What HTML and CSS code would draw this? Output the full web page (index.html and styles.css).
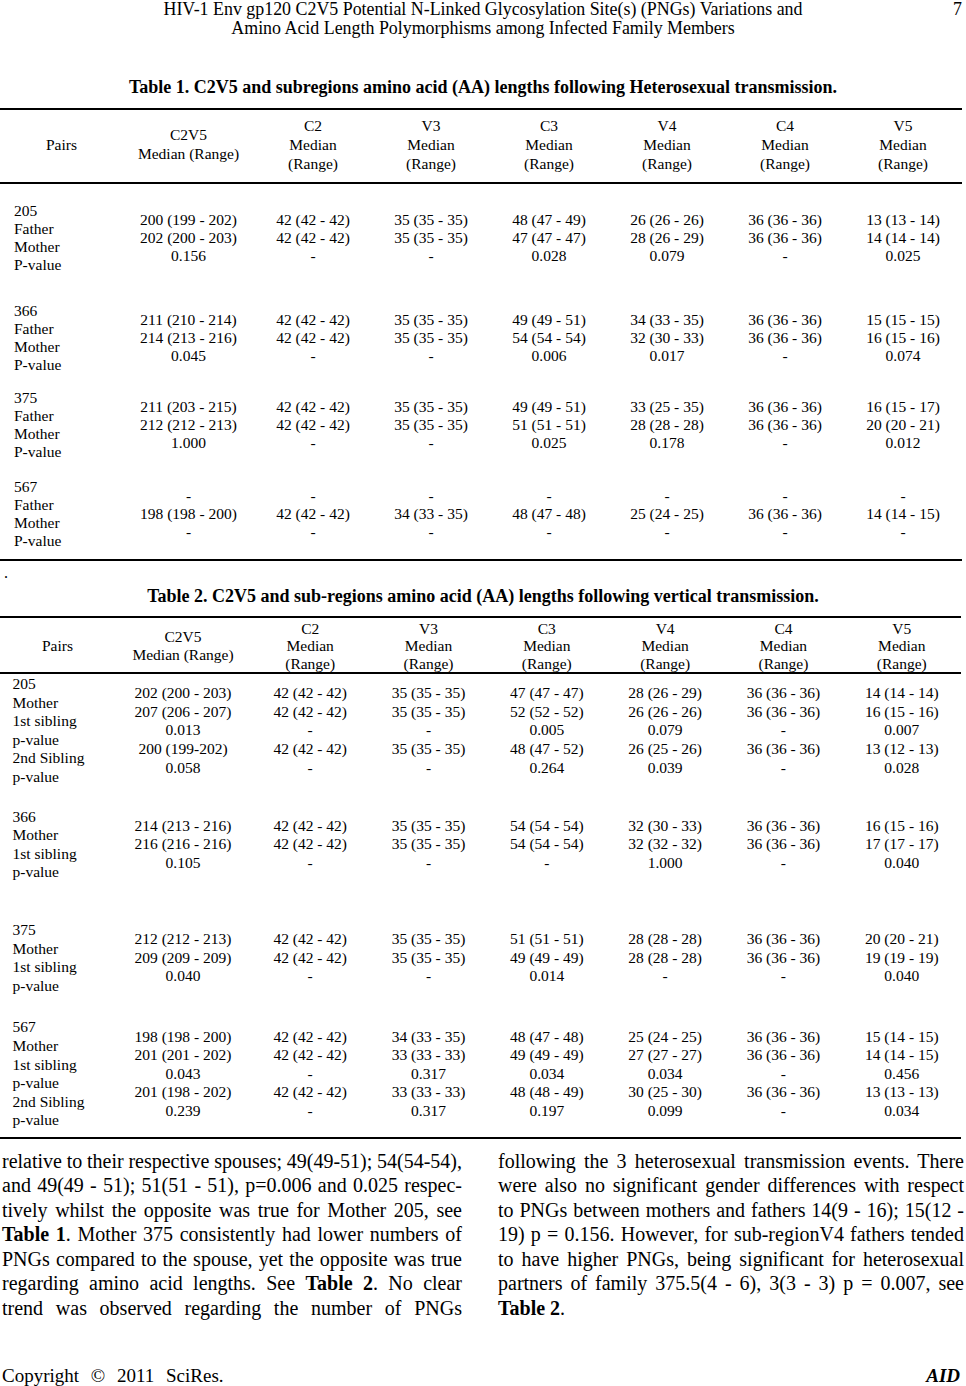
FILE: index.html
```html
<!DOCTYPE html>
<html lang="en">
<head>
<meta charset="utf-8">
<title>HIV-1 Env gp120 C2V5 PNGs — page 7</title>
<link rel="stylesheet" href="styles.css">
</head>
<body>
<div class="page">
  <header class="running-head">
    <div class="spacer"></div>
    <div class="title">HIV-1 Env gp120 C2V5 Potential N-Linked Glycosylation Site(s) (PNGs) Variations and<br>Amino Acid Length Polymorphisms among Infected Family Members</div>
    <div class="folio">7</div>
  </header>

  <p class="caption caption-1"><b>Table 1. C2V5 and subregions amino acid (AA) lengths following Heterosexual transmission.</b></p>
  <table class="data t1">
    <colgroup><col class="c-pairs"><col class="c-main"><col class="c-sub"><col class="c-sub"><col class="c-sub"><col class="c-sub"><col class="c-sub"><col class="c-sub"></colgroup>
    <thead>
      <tr>
        <th>Pairs</th>
        <th>C2V5<br>Median (Range)</th>
        <th>C2<br>Median<br>(Range)</th>
        <th>V3<br>Median<br>(Range)</th>
        <th>C3<br>Median<br>(Range)</th>
        <th>V4<br>Median<br>(Range)</th>
        <th>C4<br>Median<br>(Range)</th>
        <th>V5<br>Median<br>(Range)</th>
      </tr>
    </thead>
    <tbody>
      <tr class="r1">
        <td class="label">205<br>Father<br>Mother<br>P-value</td>
        <td>200 (199 - 202)<br>202 (200 - 203)<br>0.156</td>
        <td>42 (42 - 42)<br>42 (42 - 42)<br>-</td>
        <td>35 (35 - 35)<br>35 (35 - 35)<br>-</td>
        <td>48 (47 - 49)<br>47 (47 - 47)<br>0.028</td>
        <td>26 (26 - 26)<br>28 (26 - 29)<br>0.079</td>
        <td>36 (36 - 36)<br>36 (36 - 36)<br>-</td>
        <td>13 (13 - 14)<br>14 (14 - 14)<br>0.025</td>
      </tr>
      <tr class="r2">
        <td class="label">366<br>Father<br>Mother<br>P-value</td>
        <td>211 (210 - 214)<br>214 (213 - 216)<br>0.045</td>
        <td>42 (42 - 42)<br>42 (42 - 42)<br>-</td>
        <td>35 (35 - 35)<br>35 (35 - 35)<br>-</td>
        <td>49 (49 - 51)<br>54 (54 - 54)<br>0.006</td>
        <td>34 (33 - 35)<br>32 (30 - 33)<br>0.017</td>
        <td>36 (36 - 36)<br>36 (36 - 36)<br>-</td>
        <td>15 (15 - 15)<br>16 (15 - 16)<br>0.074</td>
      </tr>
      <tr class="r3">
        <td class="label">375<br>Father<br>Mother<br>P-value</td>
        <td>211 (203 - 215)<br>212 (212 - 213)<br>1.000</td>
        <td>42 (42 - 42)<br>42 (42 - 42)<br>-</td>
        <td>35 (35 - 35)<br>35 (35 - 35)<br>-</td>
        <td>49 (49 - 51)<br>51 (51 - 51)<br>0.025</td>
        <td>33 (25 - 35)<br>28 (28 - 28)<br>0.178</td>
        <td>36 (36 - 36)<br>36 (36 - 36)<br>-</td>
        <td>16 (15 - 17)<br>20 (20 - 21)<br>0.012</td>
      </tr>
      <tr class="r4">
        <td class="label">567<br>Father<br>Mother<br>P-value</td>
        <td>-<br>198 (198 - 200)<br>-</td>
        <td>-<br>42 (42 - 42)<br>-</td>
        <td>-<br>34 (33 - 35)<br>-</td>
        <td>-<br>48 (47 - 48)<br>-</td>
        <td>-<br>25 (24 - 25)<br>-</td>
        <td>-<br>36 (36 - 36)<br>-</td>
        <td>-<br>14 (14 - 15)<br>-</td>
      </tr>
    </tbody>
  </table>

  <p class="dot">.</p>
  <p class="caption caption-2"><b>Table 2. C2V5 and sub-regions amino acid (AA) lengths following vertical transmission.</b></p>
  <table class="data t2">
    <colgroup><col class="c-pairs"><col class="c-main"><col class="c-sub"><col class="c-sub"><col class="c-sub"><col class="c-sub"><col class="c-sub"><col class="c-sub"></colgroup>
    <thead>
      <tr>
        <th>Pairs</th>
        <th>C2V5<br>Median (Range)</th>
        <th>C2<br>Median<br>(Range)</th>
        <th>V3<br>Median<br>(Range)</th>
        <th>C3<br>Median<br>(Range)</th>
        <th>V4<br>Median<br>(Range)</th>
        <th>C4<br>Median<br>(Range)</th>
        <th>V5<br>Median<br>(Range)</th>
      </tr>
    </thead>
    <tbody>
      <tr class="r1">
        <td class="label">205<br>Mother<br>1st sibling<br>p-value<br>2nd Sibling<br>p-value</td>
        <td>202 (200 - 203)<br>207 (206 - 207)<br>0.013<br>200 (199-202)<br>0.058</td>
        <td>42 (42 - 42)<br>42 (42 - 42)<br>-<br>42 (42 - 42)<br>-</td>
        <td>35 (35 - 35)<br>35 (35 - 35)<br>-<br>35 (35 - 35)<br>-</td>
        <td>47 (47 - 47)<br>52 (52 - 52)<br>0.005<br>48 (47 - 52)<br>0.264</td>
        <td>28 (26 - 29)<br>26 (26 - 26)<br>0.079<br>26 (25 - 26)<br>0.039</td>
        <td>36 (36 - 36)<br>36 (36 - 36)<br>-<br>36 (36 - 36)<br>-</td>
        <td>14 (14 - 14)<br>16 (15 - 16)<br>0.007<br>13 (12 - 13)<br>0.028</td>
      </tr>
      <tr class="r2">
        <td class="label">366<br>Mother<br>1st sibling<br>p-value</td>
        <td>214 (213 - 216)<br>216 (216 - 216)<br>0.105</td>
        <td>42 (42 - 42)<br>42 (42 - 42)<br>-</td>
        <td>35 (35 - 35)<br>35 (35 - 35)<br>-</td>
        <td>54 (54 - 54)<br>54 (54 - 54)<br>-</td>
        <td>32 (30 - 33)<br>32 (32 - 32)<br>1.000</td>
        <td>36 (36 - 36)<br>36 (36 - 36)<br>-</td>
        <td>16 (15 - 16)<br>17 (17 - 17)<br>0.040</td>
      </tr>
      <tr class="r3">
        <td class="label">375<br>Mother<br>1st sibling<br>p-value</td>
        <td>212 (212 - 213)<br>209 (209 - 209)<br>0.040</td>
        <td>42 (42 - 42)<br>42 (42 - 42)<br>-</td>
        <td>35 (35 - 35)<br>35 (35 - 35)<br>-</td>
        <td>51 (51 - 51)<br>49 (49 - 49)<br>0.014</td>
        <td>28 (28 - 28)<br>28 (28 - 28)<br>-</td>
        <td>36 (36 - 36)<br>36 (36 - 36)<br>-</td>
        <td>20 (20 - 21)<br>19 (19 - 19)<br>0.040</td>
      </tr>
      <tr class="r4">
        <td class="label">567<br>Mother<br>1st sibling<br>p-value<br>2nd Sibling<br>p-value</td>
        <td>198 (198 - 200)<br>201 (201 - 202)<br>0.043<br>201 (198 - 202)<br>0.239</td>
        <td>42 (42 - 42)<br>42 (42 - 42)<br>-<br>42 (42 - 42)<br>-</td>
        <td>34 (33 - 35)<br>33 (33 - 33)<br>0.317<br>33 (33 - 33)<br>0.317</td>
        <td>48 (47 - 48)<br>49 (49 - 49)<br>0.034<br>48 (48 - 49)<br>0.197</td>
        <td>25 (24 - 25)<br>27 (27 - 27)<br>0.034<br>30 (25 - 30)<br>0.099</td>
        <td>36 (36 - 36)<br>36 (36 - 36)<br>-<br>36 (36 - 36)<br>-</td>
        <td>15 (14 - 15)<br>14 (14 - 15)<br>0.456<br>13 (13 - 13)<br>0.034</td>
      </tr>
    </tbody>
  </table>

  <section class="body-text">
    <div class="col">
      <p class="just">relative to their respective spouses; 49(49-51); <span class="nb">54(54-54),</span><br>and 49(49 - 51); 51(51 - 51), p=0.006 and 0.025 respec-<br>tively whilst the opposite was true for Mother 205, see<br><b>Table 1</b>. Mother 375 consistently had lower numbers of<br>PNGs compared to the spouse, yet the opposite was true<br>regarding amino acid lengths. See <b>Table 2</b>. No clear<br>trend was observed regarding the number of PNGs</p>
    </div>
    <div class="col">
      <p class="just">following the 3 heterosexual transmission events. There<br>were also no significant gender differences with respect<br>to PNGs between mothers and fathers 14(9 - 16); 15(12 -<br>19) p = 0.156. However, for sub-regionV4 fathers tended<br>to have higher PNGs, being significant for heterosexual<br>partners of family 375.5(4 - 6), 3(3 - 3) p = 0.007, see</p>
      <p class="tail"><b>Table 2</b>.</p>
    </div>
  </section>

  <footer class="foot">
    <span class="copy">Copyright © 2011 SciRes.</span>
    <span class="journal">AID</span>
  </footer>
</div>
</body>
</html>
```

FILE: styles.css
```css
html, body {
  margin: 0;
  padding: 0;
  background: #ffffff;
}

body {
  color: #000000;
  font-family: "Liberation Serif", "Times New Roman", serif;
}

.page {
  width: 966px;
  height: 1386px;
  overflow: hidden;
  display: flex;
  flex-direction: column;
}

/* running head */
.running-head {
  display: grid;
  grid-template-columns: 1fr auto 1fr;
  font-size: 17.9px;
  line-height: 19px;
  padding-top: 0;
}

.running-head .title {
  text-align: center;
}

.running-head .folio {
  justify-self: end;
  padding-right: 4px;
}

/* captions */
.caption {
  margin: 0;
  text-align: center;
  font-size: 18px;
  line-height: 20px;
}

.caption-1 {
  margin-top: 39px;
}

.caption-2 {
  margin-top: 4px;
}

.dot {
  margin: 3px 0 0;
  padding-left: 4px;
  font-size: 16px;
  line-height: 18px;
}

/* tables */
.data {
  border-collapse: collapse;
  table-layout: fixed;
  font-size: 15.5px;
}

.data th,
.data td {
  padding: 0;
  text-align: center;
  vertical-align: middle;
  font-weight: normal;
  white-space: nowrap;
}

.data td.label {
  text-align: left;
}

/* table 1 */
.t1 {
  width: 962px;
  margin-top: 11px;
  border-top: 2px solid #000;
  border-bottom: 2px solid #000;
}

.t1 thead tr {
  border-bottom: 2px solid #000;
}

.t1 th {
  line-height: 19px;
  padding-top: 5.5px;
  padding-bottom: 9px;
}

.t1 td {
  line-height: 18px;
}

.t1 .c-pairs { width: 123px; }
.t1 .c-main { width: 131px; }
.t1 .c-sub { width: 118px; }

.t1 td.label { padding-left: 14px; }

.t1 .r1 td { padding-top: 18px; }
.t1 .r2 td { padding-top: 28px; }
.t1 .r3 td { padding-top: 15px; }
.t1 .r4 td { padding-top: 17px; padding-bottom: 9px; }

/* table 2 */
.t2 {
  width: 961px;
  margin-top: 10px;
  border-top: 2px solid #000;
  border-bottom: 2px solid #000;
}

.t2 thead tr {
  border-bottom: 2px solid #000;
}

.t2 th {
  line-height: 17.5px;
  padding-top: 2px;
  padding-bottom: 0;
}

.t2 td {
  line-height: 18.6px;
}

.t2 .c-pairs { width: 115px; }
.t2 .c-main { width: 136px; }
.t2 .c-sub { width: 118.3px; }

.t2 td.label { padding-left: 12.5px; }

.t2 .r1 td { padding-top: 1px; }
.t2 .r2 td { padding-top: 21px; }
.t2 .r3 td { padding-top: 39px; }
.t2 .r4 td { padding-top: 23px; padding-bottom: 7px; }

/* body text */
.body-text {
  display: grid;
  grid-template-columns: 460px 466px;
  column-gap: 36px;
  padding-left: 2px;
  margin-top: 10px;
  font-size: 20px;
  line-height: 24.5px;
}

.body-text p {
  margin: 0;
}

.body-text .nb {
  white-space: nowrap;
}

.body-text .just {
  text-align: justify;
  text-align-last: justify;
  word-spacing: -1.5px;
}

.body-text .tail {
  text-align: left;
}

/* footer */
.foot {
  margin-top: auto;
  display: flex;
  justify-content: space-between;
  align-items: baseline;
  padding: 0 6px 0 2px;
  font-size: 19px;
  line-height: 20px;
  height: 20px;
}

.foot .copy {
  word-spacing: 7px;
}

.foot .journal {
  font-weight: bold;
  font-style: italic;
}
```
